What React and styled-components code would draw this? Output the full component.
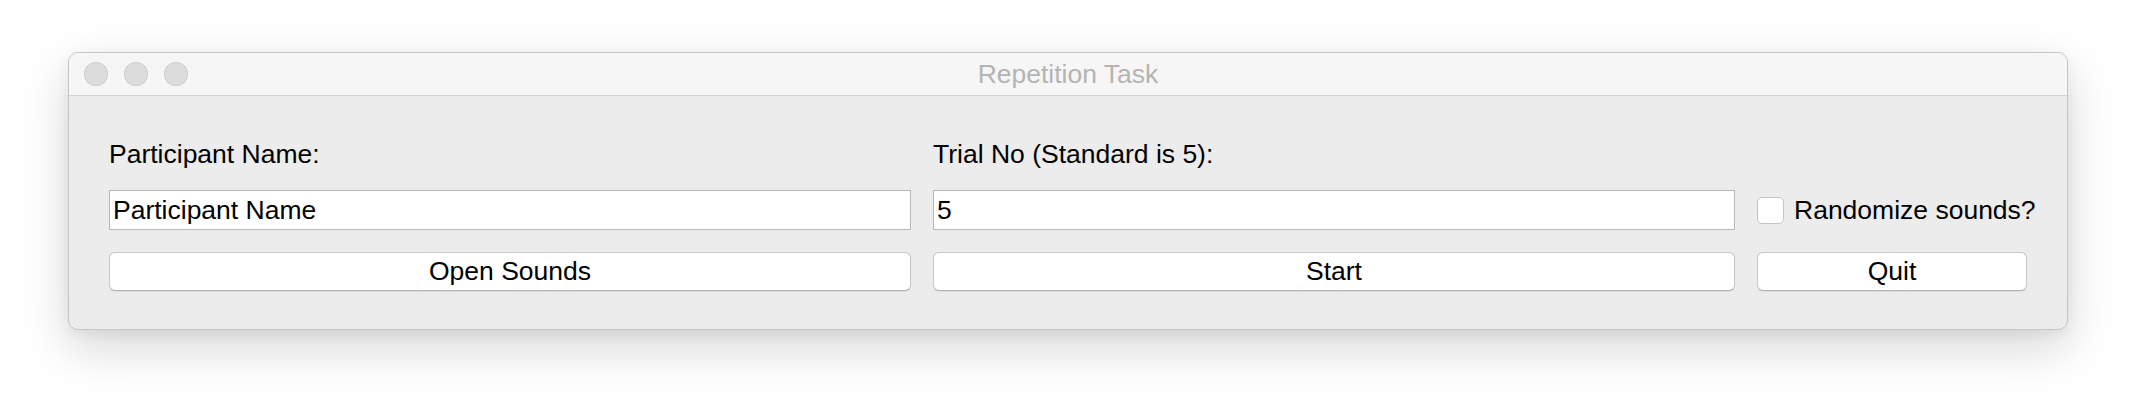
import React, {useState} from 'react'
import styled, {createGlobalStyle} from 'styled-components'

const Global = createGlobalStyle`
    html, body {
        margin: 0;
        padding: 0;
        background: #ffffff;
    }
    body {
        font-family: 'Liberation Sans', Arial, sans-serif;
    }
`

const Page = styled.main`
    width: 2136px;
    height: 414px;
    padding: 52px 68px 0 68px;
    box-sizing: border-box;
`

const Window = styled.section`
    width: 2000px;
    height: 278px;
    box-sizing: border-box;
    background: #ececec;
    border: 1px solid #c6c6c6;
    border-radius: 10px;
    overflow: hidden;
    box-shadow: 0 18px 50px rgba(0, 0, 0, 0.16), 0 4px 14px rgba(0, 0, 0, 0.06);
    display: flex;
    flex-direction: column;
`

const TitleBar = styled.header`
    height: 42px;
    flex: none;
    background: #f6f6f6;
    border-bottom: 1px solid #d2d2d2;
    display: grid;
    grid-template-columns: 200px 1fr 200px;
    align-items: center;
`

const Lights = styled.div`
    display: flex;
    gap: 16px;
    padding-left: 15px;
`

const Light = styled.span`
    width: 24px;
    height: 24px;
    border-radius: 50%;
    background: #dcdcdc;
    box-shadow: inset 0 0 0 1px #d0d0d0;
`

const Title = styled.h1`
    margin: 0;
    text-align: center;
    font-size: 26.5px;
    font-weight: normal;
    color: #b4b4b4;
    line-height: 42px;
`

const Body = styled.div`
    padding: 42px 40px 0 40px;
    display: grid;
    grid-template-columns: 802px 802px 270px;
    grid-template-rows: auto auto auto;
    column-gap: 22px;
    row-gap: 0;
    align-items: start;
`

const Label = styled.label`
    font-size: 26.5px;
    line-height: 32px;
    color: #000;
    white-space: nowrap;
`

const Field = styled.input`
    margin-top: 20px;
    height: 40px;
    box-sizing: border-box;
    border: 1px solid #b8b8b8;
    background: #fff;
    padding: 0 3px;
    font-family: 'Liberation Sans', Arial, sans-serif;
    font-size: 26.5px;
    color: #000;
    outline: none;
`

const Check = styled.label`
    margin-top: 20px;
    height: 40px;
    display: flex;
    align-items: center;
    gap: 10px;
    font-size: 26.5px;
    white-space: nowrap;
    cursor: pointer;
`

const Box = styled.span`
    flex: none;
    width: 27px;
    height: 27px;
    box-sizing: border-box;
    border-radius: 5px;
    border: 1px solid #c4c4c4;
    background: ${p => (p.$on ? '#2e7cf6' : '#fff')};
    display: flex;
    align-items: center;
    justify-content: center;
    color: #fff;
    font-size: 20px;
`

const Button = styled.button`
    margin-top: 22px;
    height: 39px;
    box-sizing: border-box;
    border: 1px solid #c9c9c9;
    border-bottom-color: #b4b4b4;
    border-radius: 6px;
    background: #fff;
    font-family: 'Liberation Sans', Arial, sans-serif;
    font-size: 26.5px;
    color: #000;
    padding: 0;
    box-shadow: 0 1px 1px rgba(0, 0, 0, 0.08);
`

export default function App() {
    const [name, setName] = useState('Participant Name')
    const [trials, setTrials] = useState('5')
    const [random, setRandom] = useState(false)

    return (
        <Page>
            <Global />
            <Window>
                <TitleBar>
                    <Lights>
                        <Light />
                        <Light />
                        <Light />
                    </Lights>
                    <Title>Repetition Task</Title>
                    <span />
                </TitleBar>
                <Body>
                    <Label>Participant Name:</Label>
                    <Label>Trial No (Standard is 5):</Label>
                    <span />

                    <Field value={name} onChange={e => setName(e.target.value)} />
                    <Field value={trials} onChange={e => setTrials(e.target.value)} />
                    <Check onClick={() => setRandom(!random)}>
                        <Box $on={random}>{random ? '✓' : ''}</Box>
                        Randomize sounds?
                    </Check>

                    <Button>Open Sounds</Button>
                    <Button>Start</Button>
                    <Button>Quit</Button>
                </Body>
            </Window>
        </Page>
    )
}
